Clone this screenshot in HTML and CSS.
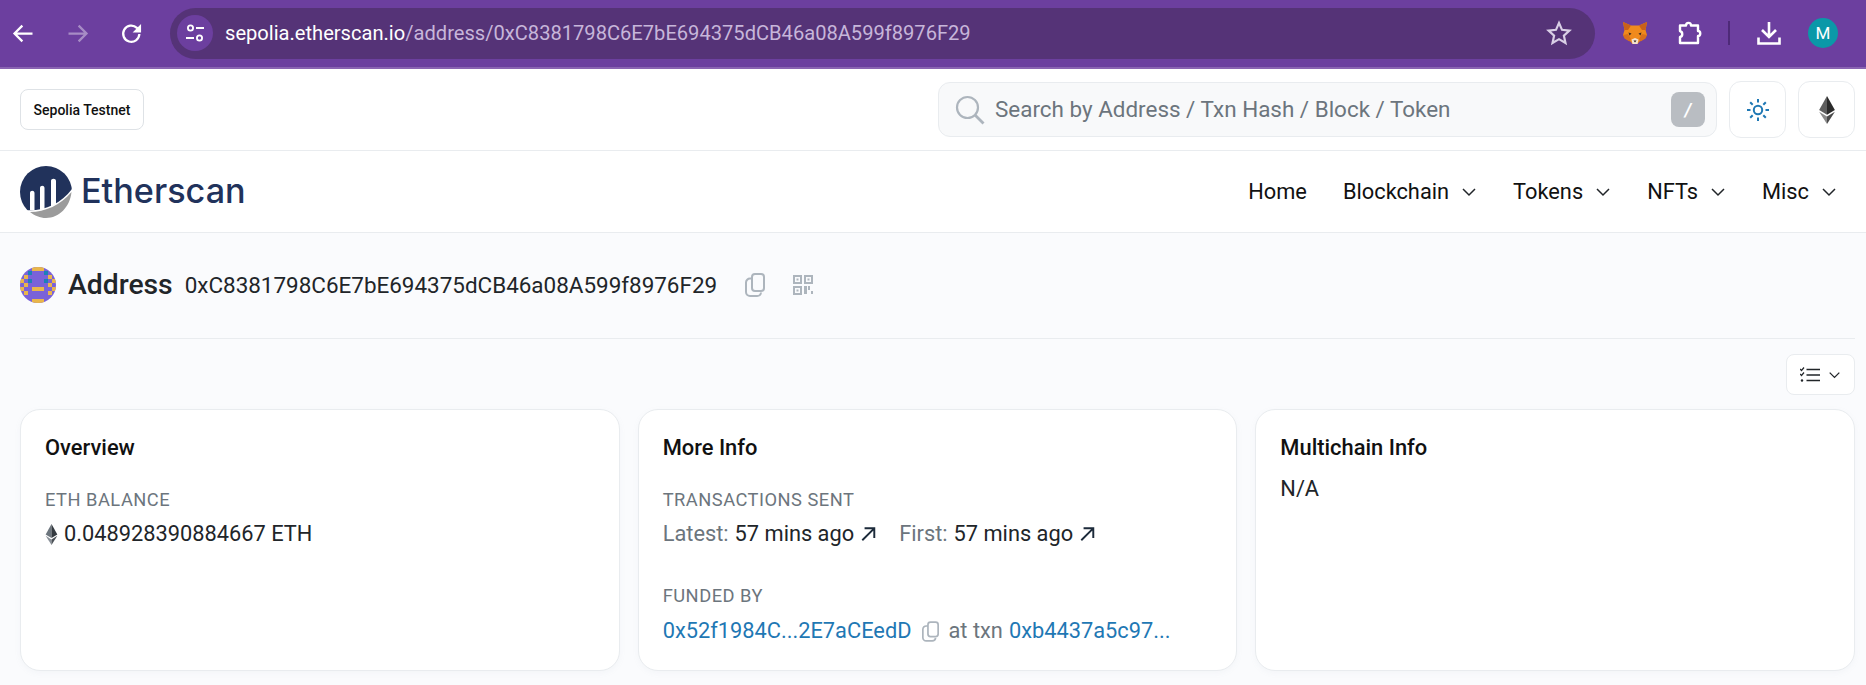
FILE: index.html
```html
<!DOCTYPE html>
<html lang="en">
<head>
<meta charset="utf-8">
<title>Address 0xC8381798C6E7bE694375dCB46a08A599f8976F29</title>
<link rel="stylesheet" href="styles.css">
</head>
<body>
<div class="chrome">
  <div class="nav-icons">
    <svg class="ci" viewBox="0 0 24 24"><path d="M20 12H5M11 5l-7 7 7 7" fill="none" stroke="#fff" stroke-width="2"/></svg>
    <svg class="ci dim" viewBox="0 0 24 24"><path d="M4 12h15M13 5l7 7-7 7" fill="none" stroke="#fff" stroke-width="2"/></svg>
    <svg class="ci" viewBox="0 0 24 24"><path d="M19 12.500A7.200 7.200 0 1 1 16.800 7L19 9.200" fill="none" stroke="#fff" stroke-width="2"/><path d="M20.500 3.500v7.500H13z" fill="#fff"/></svg>
  </div>
  <div class="omnibox">
    <span class="tune"><svg viewBox="0 0 24 24" width="24" height="24"><circle cx="7.500" cy="7" r="2.600" fill="none" stroke="#fff" stroke-width="1.800"/><path d="M13 7h8M3 17h8" stroke="#fff" stroke-width="2"/><circle cx="16.500" cy="17" r="2.600" fill="none" stroke="#fff" stroke-width="1.800"/></svg></span>
    <span class="url"><span class="host">sepolia.etherscan.io</span>/address/0xC8381798C6E7bE694375dCB46a08A599f8976F29</span>
    <svg class="star" viewBox="0 0 24 24"><path d="M12 2.800l2.800 6.300 6.800.7-5.100 4.600 1.500 6.800-6-3.500-6 3.500 1.500-6.800-5.100-4.600 6.800-.7z" fill="none" stroke="#d9cfe6" stroke-width="2"/></svg>
  </div>
  <div class="ext">
    <svg class="fox" viewBox="0 0 24 22">
      <path d="M0 0l8 3.500h8L24 0l-1.500 8 1.500 5-2.500 3.500-5 3-2 2.500h-5l-2-2.500-5-3L0 13l1.500-5z" fill="#f08a1d"/>
      <path d="M0 0l8 3.500L5 8H1.500zM24 0l-8 3.500L19 8h3.500z" fill="#c9611a"/>
      <path d="M0 13l5-1 3 5-1.500 2.500-5-3zM24 13l-5-1-3 5 1.500 2.500 5-3z" fill="#d9701c"/>
      <path d="M8.500 17.500L12 16l3.500 1.500-1 4.500h-5z" fill="#f5e3d0"/>
      <path d="M5.500 10.500l3 1-2 2zM18.500 10.500l-3 1 2 2z" fill="#3a2a20"/>
      <path d="M10.500 18.500h3L12 20.500z" fill="#2a2320"/>
    </svg>
    <svg class="puzzle" viewBox="0 0 24 24"><path d="M2 4.500H8C8 1 13 1 13 4.500h7V10c3 0 3 5 0 5v7H2v-6c3-.5 3-5 0-6z" fill="none" stroke="#fff" stroke-width="2.400" stroke-linejoin="round"/></svg>
    <span class="sep"></span>
    <svg class="dl" viewBox="0 0 24 24"><path d="M12 1v14.500M5 9l7 7 7-7M1.500 16.500v6h21v-6" fill="none" stroke="#fff" stroke-width="2.600"/></svg>
    <span class="avatar">M</span>
  </div>
</div>

<header class="top">
  <span class="net">Sepolia Testnet</span>
  <div class="top-right">
    <div class="search">
      <svg class="lens" viewBox="0 0 30 30"><circle cx="12.500" cy="12.500" r="10.500" fill="none" stroke="#adb5bd" stroke-width="2.200"/><path d="M20 20l8.500 8.500" stroke="#adb5bd" stroke-width="2.800"/></svg>
      <span class="ph">Search by Address / Txn Hash / Block / Token</span>
      <kbd class="slash">/</kbd>
    </div>
    <button class="sq"><svg viewBox="0 0 24 24" width="24" height="24"><circle cx="12" cy="12" r="4.200" fill="none" stroke="#1f78b4" stroke-width="2"/><path d="M12 1v3.500M12 19.500V23M1 12h3.500M19.500 12H23M4.200 4.200l2.500 2.500M17.300 17.300l2.500 2.500M4.200 19.800l2.500-2.500M17.300 6.700l2.500-2.500" stroke="#1f78b4" stroke-width="2"/></svg></button>
    <button class="sq"><svg viewBox="0 0 20 32" width="18" height="28"><path d="M10 0L1 16l9 5.500z" fill="#5f5f5f"/><path d="M10 0l9 16-9 5.500z" fill="#2b2b2b"/><path d="M1 18l9 14V23.500z" fill="#8a8a8a"/><path d="M19 18l-9 14V23.500z" fill="#4a4a4a"/></svg></button>
  </div>
</header>

<nav class="mainnav">
  <div class="logo">
    <svg class="mark" viewBox="0 0 52 52">
      <circle cx="26" cy="26" r="26" fill="#21325b"/>
      <path d="M4 44C22 46 40 39 52 23V52H4z" fill="#fff"/>
      <path d="M10 46C25 46 41 39 51.500 26 50 41 39 52 26 52 20 52 14.500 49.500 10 46z" fill="#9b9b9b"/>
      <path d="M10 44V27c0-3 4.500-3 4.500 0v17zM20 44V22c0-3 4.500-3 4.500 0v21zM31 41V15c0-3 5-3 5 0v23z" fill="#fff"/>
    </svg>
    <span class="brand">Etherscan</span>
  </div>
  <ul class="menu">
    <li>Home</li>
    <li>Blockchain<svg class="caret" viewBox="0 0 16 10"><path d="M2 2l6 6 6-6" fill="none" stroke="#212529" stroke-width="1.500"/></svg></li>
    <li>Tokens<svg class="caret" viewBox="0 0 16 10"><path d="M2 2l6 6 6-6" fill="none" stroke="#212529" stroke-width="1.500"/></svg></li>
    <li>NFTs<svg class="caret" viewBox="0 0 16 10"><path d="M2 2l6 6 6-6" fill="none" stroke="#212529" stroke-width="1.500"/></svg></li>
    <li>Misc<svg class="caret" viewBox="0 0 16 10"><path d="M2 2l6 6 6-6" fill="none" stroke="#212529" stroke-width="1.500"/></svg></li>
  </ul>
</nav>

<main class="page">
  <div class="addr-row">
    <svg class="blockie" viewBox="0 0 9 9">
      <defs><clipPath id="round"><circle cx="4.500" cy="4.500" r="4.500"/></clipPath></defs>
      <g clip-path="url(#round)">
        <rect width="9" height="9" fill="#7a62d8"/>
        <path d="M3 0h3v1H3zM1 2h1v1H1zM7 2h1v1H7zM0 3h1v1H0zM8 3h1v1H8zM1 4h1v1H1zM7 4h1v1H7zM0 5h1v1H0zM8 5h1v1H8zM3 5h3v1H3zM1 6h1v1H1zM7 6h1v1H7zM3 8h3v1H3z" fill="#e9b64b"/>
        <path d="M2 1h1v1H2zM6 1h1v1H6zM2 3h1v1H2zM6 3h1v1H6z" fill="#1d80b8"/>
      </g>
    </svg>
    <h1 class="title">Address</h1>
    <span class="hash">0xC8381798C6E7bE694375dCB46a08A599f8976F29</span>
    <svg class="copy big" viewBox="0 0 20 24"><use href="#copy-shape"/></svg>
    <svg class="qr" viewBox="0 0 20 20">
      <path d="M1 1h7v7H1zM12 1h7v7h-7zM1 12h7v7H1z" fill="none" stroke="#adb5bd" stroke-width="2"/>
      <path d="M3.500 3.500h2v2h-2zM14.500 3.500h2v2h-2zM3.500 14.500h2v2h-2zM11 11h3v8h-3zM15 11h2v4h-2zM18 16h2v3h-2z" fill="#adb5bd"/>
    </svg>
  </div>
  <hr class="rule">
  <div class="tools">
    <button class="filter">
      <svg viewBox="0 0 20 16" width="20" height="16"><path d="M0 2l1.500 1.500L4 .500M0 7l1.500 1.500L4 5.500" fill="none" stroke="#212529" stroke-width="1.200"/><path d="M6.500 2.500H20M6.500 8H20M6.500 13.500H20" stroke="#212529" stroke-width="1.500"/><circle cx="2" cy="13.500" r="1.200" fill="#212529"/></svg>
      <svg viewBox="0 0 16 10" width="13" height="8"><path d="M2 2l6 6 6-6" fill="none" stroke="#212529" stroke-width="1.600"/></svg>
    </button>
  </div>
  <section class="cards">
    <article class="card">
      <h2>Overview</h2>
      <div class="label">ETH BALANCE</div>
      <div class="line">
        <svg class="eth" viewBox="0 0 20 32"><path d="M10 0L1 16l9 5.500z" fill="#6c757d"/><path d="M10 0l9 16-9 5.500z" fill="#343a40"/><path d="M1 18l9 14V23.500z" fill="#8a9199"/><path d="M19 18l-9 14V23.500z" fill="#4a5056"/></svg>
        <span>0.048928390884667 ETH</span>
      </div>
    </article>
    <article class="card">
      <h2>More Info</h2>
      <div class="label">TRANSACTIONS SENT</div>
      <div class="line">
        <span class="muted">Latest:</span><span>57 mins ago</span>
        <svg class="arrow" viewBox="0 0 14 14"><path d="M2 12.500L12 2.500M4 2h8.500v8.500" fill="none" stroke="#1c2a3a" stroke-width="1.700"/></svg>
        <span class="muted second">First:</span><span>57 mins ago</span>
        <svg class="arrow" viewBox="0 0 14 14"><path d="M2 12.500L12 2.500M4 2h8.500v8.500" fill="none" stroke="#1c2a3a" stroke-width="1.700"/></svg>
      </div>
      <div class="label funded">FUNDED BY</div>
      <div class="line">
        <span class="link">0x52f1984C...2E7aCEedD</span>
        <svg class="copy" viewBox="0 0 20 24"><use href="#copy-shape"/></svg>
        <span class="muted">at txn</span>
        <span class="link">0xb4437a5c97...</span>
      </div>
    </article>
    <article class="card">
      <h2>Multichain Info</h2>
      <div class="line na">N/A</div>
    </article>
  </section>
</main>
<svg class="defs" aria-hidden="true"><defs><g id="copy-shape" fill="none" stroke="#adb5bd" stroke-width="2"><rect x="7" y="1" width="12" height="17" rx="3"/><path d="M7 5.500H5a4 4 0 0 0-4 4V19a4 4 0 0 0 4 4h7a4 4 0 0 0 4-3.500"/></g></defs></svg>
</body>
</html>
```
FILE: styles.css
```css
* { box-sizing: border-box; }
html, body { margin: 0; padding: 0; height: 685px; overflow: hidden; }
body { font-family: Roboto, "Liberation Sans", sans-serif; background: #fafbfd; color: #212529; }

.chrome { height: 69px; background: #6c3f9f; border-bottom: 2px solid #8a64b2; display: flex; align-items: center; padding-bottom: 1px; }
.nav-icons { display: flex; gap: 27px; padding-left: 10px; width: 170px; }
.ci { width: 27px; height: 27px; }
.ci.dim { opacity: .4; }
.omnibox { width: 1425px; height: 51px; border-radius: 26px; background: #553377; display: flex; align-items: center; padding: 0 23px 0 7px; }
.tune { height: 36px; width: 36px; border-radius: 50%; background: #6c3f9f; display: flex; align-items: center; justify-content: center; flex: none; }
.url { flex: 1; margin-left: 12px; font-size: 20.130px; color: #c7b6da; white-space: nowrap; }
.host { color: #fff; }
.star { width: 26px; height: 26px; }
.ext { display: flex; align-items: center; padding-left: 28px; flex: 1; }
.fox { width: 24px; height: 22px; }
.puzzle { width: 24px; height: 24px; margin-left: 31px; }
.sep { width: 2px; height: 24px; background: #4e2a78; margin-left: 26px; }
.dl { width: 24px; height: 24px; margin-left: 27px; }
.avatar { width: 30px; height: 30px; border-radius: 50%; background: #0b98a8; color: #fff; font-size: 17px; display: flex; align-items: center; justify-content: center; margin-left: 27px; }

.top { height: 82px; background: #fff; border-bottom: 1px solid #e9ecef; display: flex; align-items: center; justify-content: space-between; padding: 0 11px 0 20px; }
.net { border: 1px solid #dee2e6; border-radius: 8px; height: 41px; width: 124px; display: flex; align-items: center; justify-content: center; font-size: 14px; font-weight: 500; color: #111; }
.top-right { display: flex; gap: 12px; align-items: center; }
.search { width: 779px; height: 55px; border: 1px solid #e9ecef; border-radius: 12px; background: #f8f9fa; display: flex; align-items: center; padding: 0 11px 0 16px; }
.lens { width: 30px; height: 30px; flex: none; }
.ph { flex: 1; margin: 0 0 2px 10px; font-size: 22.450px; color: #6c757d; white-space: nowrap; }
.slash { width: 34px; height: 35px; border-radius: 8px; background: #b9bdc2; color: #fff; font-family: Roboto, sans-serif; font-style: italic; font-weight: 700; font-size: 18px; display: flex; align-items: center; justify-content: center; }
.sq { width: 57px; height: 57px; border: 1px solid #e9ecef; border-radius: 12px; background: #fff; padding: 0; display: flex; align-items: center; justify-content: center; }

.mainnav { height: 82px; background: #fff; border-bottom: 1px solid #e9ecef; display: flex; align-items: center; justify-content: space-between; padding: 0 29px 0 20px; }
.logo { display: flex; align-items: center; gap: 9px; }
.mark { width: 52px; height: 52px; }
.brand { font-family: Inter, sans-serif; font-weight: 500; font-size: 34.200px; color: #21325b; line-height: 1; }
.menu { list-style: none; display: flex; gap: 36px; margin: 0; padding: 0; font-size: 21.800px; color: #111; }
.menu li { display: flex; align-items: center; gap: 12px; }
.caret { width: 16px; height: 10px; }

.page { padding: 0 11px 0 20px; }
.addr-row { display: flex; align-items: center; height: 105px; padding-bottom: 1px; }
.blockie { width: 36px; height: 36px; flex: none; }
.title { font-size: 28.300px; font-weight: 500; margin: 0 0 2px 12px; color: #212529; }
.hash { font-size: 22.450px; margin-left: 12px; color: #212529; }
.copy { width: 17px; height: 21px; margin: 0 0 0 10px; }
.copy.big { width: 20px; height: 24px; margin-left: 28px; }
.qr { width: 20px; height: 20px; margin-left: 28px; }
.rule { border: 0; border-top: 1px solid #e9ecef; margin: 0; }
.tools { display: flex; justify-content: flex-end; padding-top: 15px; }
.filter { width: 69px; height: 41px; border: 1px solid #e9ecef; border-radius: 8px; background: #fff; display: flex; align-items: center; justify-content: center; gap: 8px; padding: 0; }
.cards { display: grid; grid-template-columns: repeat(3, 1fr); gap: 18px; margin-top: 14px; }
.card { height: 262px; background: #fff; border: 1px solid #e9ecef; border-radius: 20px; padding: 24px; box-shadow: 0 2px 6px rgba(140, 152, 164, .06); }
.card h2 { font-size: 21.900px; font-weight: 500; margin: 0; color: #111; line-height: 27px; }
.label { font-size: 18.300px; color: #6c757d; letter-spacing: .5px; margin-top: 27px; line-height: 24px; }
.label.funded { margin-top: 35px; }
.line { display: flex; align-items: center; font-size: 21.800px; line-height: 30px; margin-top: 7px; color: #212529; white-space: nowrap; }
.label.funded + .line { margin-top: 8px; }
.line.na { margin-top: 13px; }
.eth { width: 13px; height: 21px; margin-right: 6px; }
.muted { color: #6c757d; margin-right: 6px; }
.second { margin-left: 23px; }
.arrow { width: 16px; height: 16px; margin-left: 6px; }
.link { color: #1f78b4; }
.line .copy { margin: 0 10px; }
.defs { position: absolute; width: 0; height: 0; }
```
